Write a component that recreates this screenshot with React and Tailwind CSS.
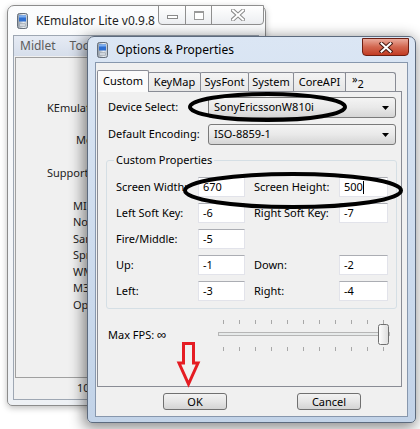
function PhoneIcon() {
  return (
    <svg width="11" height="16" viewBox="0 0 11 16" className="shrink-0">
      <defs>
        <linearGradient id="phoneBody" x1="0" x2="1" y1="0" y2="0">
          <stop offset="0" stopColor="#8e98a3" />
          <stop offset="0.6" stopColor="#e9edf1" />
          <stop offset="1" stopColor="#b9c1ca" />
        </linearGradient>
      </defs>
      <rect x="0.5" y="0.5" width="10" height="15" rx="2" fill="url(#phoneBody)" stroke="#66707c" />
      <rect x="2" y="2.5" width="7" height="6" fill="#2f6fd0" />
      <rect x="2" y="2.5" width="7" height="2" fill="#7fb0f0" />
      <rect x="2.5" y="10.5" width="6" height="3" rx="0.5" fill="#cfd5dc" stroke="#8e98a3" strokeWidth="0.5" />
    </svg>
  );
}

function BackWindow() {
  return (
    <div className="absolute left-[7px] top-[5px] w-[259px] h-[401px] flex flex-col rounded-t-[7px] rounded-b-[5px] border border-[#8c8c8c] bg-gradient-to-b from-[#fbfcfd] to-[#eef1f5] shadow-[0_2px_6px_rgba(0,0,0,0.25)]">
      {/* Title bar */}
      <div className="relative h-[29px] flex items-center pl-[9px] gap-[8px]">
        <PhoneIcon />
        <span className="text-[12px] text-[#1f1f1f] leading-none">KEmulator Lite v0.9.8</span>
        <div className="absolute top-[-1px] right-[1px] flex">
          <div className="w-[28px] h-[20px] flex items-center justify-center border border-[#8f8f8f] rounded-bl-[4px] bg-gradient-to-b from-white to-[#eceef1]">
            <div className="w-[11px] h-[4px] mt-[4px] border border-[#8a8a8a] bg-white" />
          </div>
          <div className="w-[27px] h-[20px] -ml-px flex items-center justify-center border border-[#8f8f8f] bg-gradient-to-b from-white to-[#eceef1]">
            <div className="w-[10px] h-[9px] border border-[#9a9a9a] border-t-2 bg-white" />
          </div>
          <div className="w-[53px] h-[20px] -ml-px flex items-center justify-center border border-[#8f8f8f] rounded-br-[4px] bg-gradient-to-b from-white to-[#eceef1]">
            <svg width="14" height="12" viewBox="0 0 14 12">
              <path d="M2 1.5 L12 10.5 M12 1.5 L2 10.5" stroke="#8a8a8a" strokeWidth="4" strokeLinecap="square" />
              <path d="M2 1.5 L12 10.5 M12 1.5 L2 10.5" stroke="#ffffff" strokeWidth="2" strokeLinecap="square" />
            </svg>
          </div>
        </div>
      </div>

      {/* Client area */}
      <div className="flex-1 ml-[5px] mr-[6px] mb-[5px] flex flex-col border border-[#9ea7b3] bg-[#f0f0f0]">
        <div className="h-[20px] flex items-center gap-[14px] pl-[6px] bg-gradient-to-b from-[#e6ebf4] to-[#d6deeb] text-[#5c5c5c] text-[12px]">
          <span>Midlet</span>
          <span>Tool</span>
          <span>View</span>
        </div>
        <div className="flex-1 mx-[1px] mt-px border border-[#a0a0a0] bg-[#f0f0f0] text-[#1c1c1c]">
          <div className="pt-[42px] pl-[31px]">KEmulator Lite v0.9.8</div>
          <div className="pt-[15px] pl-[60px]">Mod by KEmulator team</div>
          <div className="pt-[17px] pl-[31px]">Supported APIs:</div>
          <div className="pt-[16px] pl-[57px] flex flex-col leading-[16.5px]">
            <span>MIDP 2.0</span>
            <span>Nokia UI</span>
            <span>Samsung API</span>
            <span>Sprint API</span>
            <span>WMA 1.1</span>
            <span>M3G 1.1</span>
            <span>OpenGL ES</span>
          </div>
        </div>
        <div className="h-[21px] flex items-center pl-[63px] text-[#1c1c1c]">100%</div>
      </div>
    </div>
  );
}

function Combo({ value }) {
  return (
    <div className="w-[188px] h-[21px] flex items-center justify-between pl-[5px] pr-[6px] border border-[#7a7a7a] rounded-[3px] bg-gradient-to-b from-[#f4f4f4] via-[#e9e9e9] to-[#d5d5d5]">
      <span>{value}</span>
      <svg width="7" height="4" viewBox="0 0 7 4">
        <path d="M0 0 H7 L3.5 4 Z" fill="#000" />
      </svg>
    </div>
  );
}

function TextBox({ value, caret, w = 'w-[47px]' }) {
  return (
    <div className={`${w} h-[20px] flex items-center pl-[4px] border border-[#e2e3ea] border-t-[#abadb3] bg-white`}>
      <span>{value}</span>
      {caret && <span className="w-px h-[13px] bg-black" />}
    </div>
  );
}

function PropRow({ left, leftVal, right, rightVal, caret }) {
  return (
    <div className="h-[20px] flex items-center">
      <span className="w-[91px] pl-[9px] whitespace-nowrap overflow-hidden">{left}</span>
      <TextBox value={leftVal} />
      {right && (
        <>
          <span className="w-[94px] pl-[9px] whitespace-nowrap">{right}</span>
          <TextBox value={rightVal} caret={caret} w="w-[49px]" />
        </>
      )}
    </div>
  );
}

function Slider() {
  const ticks = Array.from({ length: 11 }, (_, i) => 8 + i * 16);
  return (
    <svg width="180" height="36" viewBox="0 0 180 36">
      {ticks.map((x) => (
        <g key={x}>
          <rect x={x} y="3" width="1" height="4" fill="#a8a8a8" />
          <rect x={x} y="30" width="1" height="4" fill="#a8a8a8" />
        </g>
      ))}
      <rect x="3.5" y="15.5" width="171" height="3" fill="#e7eaea" stroke="#b6b6b6" />
      <defs>
        <linearGradient id="thumb" x1="0" x2="1">
          <stop offset="0" stopColor="#ffffff" />
          <stop offset="1" stopColor="#dcdcdc" />
        </linearGradient>
      </defs>
      <rect x="163.5" y="7.5" width="10" height="20" rx="2" fill="url(#thumb)" stroke="#707070" />
    </svg>
  );
}

function OptionsDialog() {
  const tabs = [
    ['KeyMap', 'w-[53px]'],
    ['SysFont', 'w-[49px]'],
    ['System', 'w-[46px]'],
    ['CoreAPI', 'w-[53px]'],
  ];
  return (
    <div className="absolute left-[87px] top-[36px] w-[329px] h-[387px] flex flex-col rounded-t-[7px] rounded-b-[5px] border border-[#5d6b7e] bg-gradient-to-b from-[#dbe6f4] to-[#c2d3e8] shadow-[-2px_3px_14px_2px_rgba(0,0,0,0.45)]">
      {/* Title bar */}
      <div className="relative h-[25px] flex items-center pl-[9px] gap-[8px]">
        <PhoneIcon />
        <span className="text-[12px] leading-none">Options &amp; Properties</span>
        <div className="absolute top-[1px] right-[6px] w-[47px] h-[18px] flex items-center justify-center rounded-b-[4px] border border-[#6e1f12] bg-gradient-to-b from-[#e9a99b] via-[#d2664f] to-[#c23b22]">
          <svg width="14" height="11" viewBox="0 0 14 11">
            <path d="M2.5 1.5 L11.5 9.5 M11.5 1.5 L2.5 9.5" stroke="#4a1a12" strokeWidth="4" strokeLinecap="square" />
            <path d="M2.5 1.5 L11.5 9.5 M11.5 1.5 L2.5 9.5" stroke="#ffffff" strokeWidth="2" strokeLinecap="square" />
          </svg>
        </div>
      </div>

      {/* Client area */}
      <div className="flex-1 mx-[7px] mb-[5px] flex flex-col border border-[#8797ad] bg-[#f0f0f0]">
        {/* Tab strip */}
        <div className="h-[28px] ml-px flex items-end">
          <div className="relative z-10 w-[52px] h-[22px] -mb-px flex items-center justify-center border border-b-0 border-[#898c95] rounded-t-[2px] bg-[#fbfbfb]">
            Custom
          </div>
          {tabs.map(([t, w]) => (
            <div key={t} className={`${w} h-[19px] -ml-px flex items-center justify-center border border-b-0 border-[#898c95] rounded-t-[2px] bg-gradient-to-b from-[#f4f4f4] to-[#e6e6e6]`}>
              {t}
            </div>
          ))}
          <div className="w-[51px] h-[19px] -ml-px flex items-start pl-[6px] border border-b-0 border-[#898c95] rounded-tr-[3px] bg-[#f0f0f0]">
            <span className="text-[11px] leading-none tracking-[-2px]">»</span>
            <span className="text-[11px] leading-none mt-[5px] ml-[2px]">2</span>
          </div>
        </div>

        {/* Tab panel */}
        <div className="ml-px w-[305px] h-[296px] flex flex-col border border-[#898c95] bg-[#f0f0f0]">
          <div className="mt-[5px] flex items-center pl-[10px]">
            <span className="w-[100px]">Device Select:</span>
            <Combo value="SonyEricssonW810i" />
          </div>
          <div className="mt-[6px] flex items-center pl-[10px]">
            <span className="w-[100px]">Default Encoding:</span>
            <Combo value="ISO-8859-1" />
          </div>

          <fieldset className="mt-[7px] ml-[8px] w-[291px] border border-[#d5dfe5] rounded-[3px] pb-[7px] flex flex-col gap-[6px]">
            <legend className="ml-[7px] px-[2px] leading-[16px]">Custom Properties</legend>
            <div className="h-[3px]" />
            <PropRow left="Screen Width:" leftVal="670" right="Screen Height:" rightVal="500" caret />
            <PropRow left="Left Soft Key:" leftVal="-6" right="Right Soft Key:" rightVal="-7" />
            <PropRow left="Fire/Middle:" leftVal="-5" />
            <PropRow left="Up:" leftVal="-1" right="Down:" rightVal="-2" />
            <PropRow left="Left:" leftVal="-3" right="Right:" rightVal="-4" />
          </fieldset>

          <div className="mt-[8px] h-[36px] flex items-center">
            <span className="w-[117px] pl-[10px]">
              Max FPS: <span className="text-[13px] leading-none">∞</span>
            </span>
            <Slider />
          </div>
        </div>

        {/* Buttons */}
        <div className="mt-[6px] flex pl-[67px] gap-[70px]">
          <button className="w-[64px] h-[17px] flex items-center justify-center border border-[#707070] rounded-[3px] bg-gradient-to-b from-[#f2f2f2] via-[#e6e6e6] to-[#d4d4d4] leading-none">
            OK
          </button>
          <button className="w-[64px] h-[17px] flex items-center justify-center border border-[#707070] rounded-[3px] bg-gradient-to-b from-[#f2f2f2] via-[#e6e6e6] to-[#d4d4d4] leading-none">
            Cancel
          </button>
        </div>
      </div>
    </div>
  );
}

function Annotations() {
  return (
    <svg className="absolute inset-0 pointer-events-none" width="420" height="429" viewBox="0 0 420 429">
      <ellipse cx="267.5" cy="107" rx="77.5" ry="13" fill="none" stroke="#000" strokeWidth="4" />
      <ellipse cx="293" cy="190.5" rx="108" ry="16.5" fill="none" stroke="#000" strokeWidth="4" />
      <path
        d="M183.5 343.5 H193.5 V363 H198 L188.5 384 L179 363 H183.5 Z"
        fill="none"
        stroke="#e51c23"
        strokeWidth="3"
        strokeLinejoin="miter"
      />
    </svg>
  );
}

export default function App() {
  return (
    <div className="relative w-[420px] h-[429px] overflow-hidden bg-white font-['Noto_Sans',sans-serif] text-[11px] text-black">
      <BackWindow />
      <OptionsDialog />
      <Annotations />
    </div>
  );
}
